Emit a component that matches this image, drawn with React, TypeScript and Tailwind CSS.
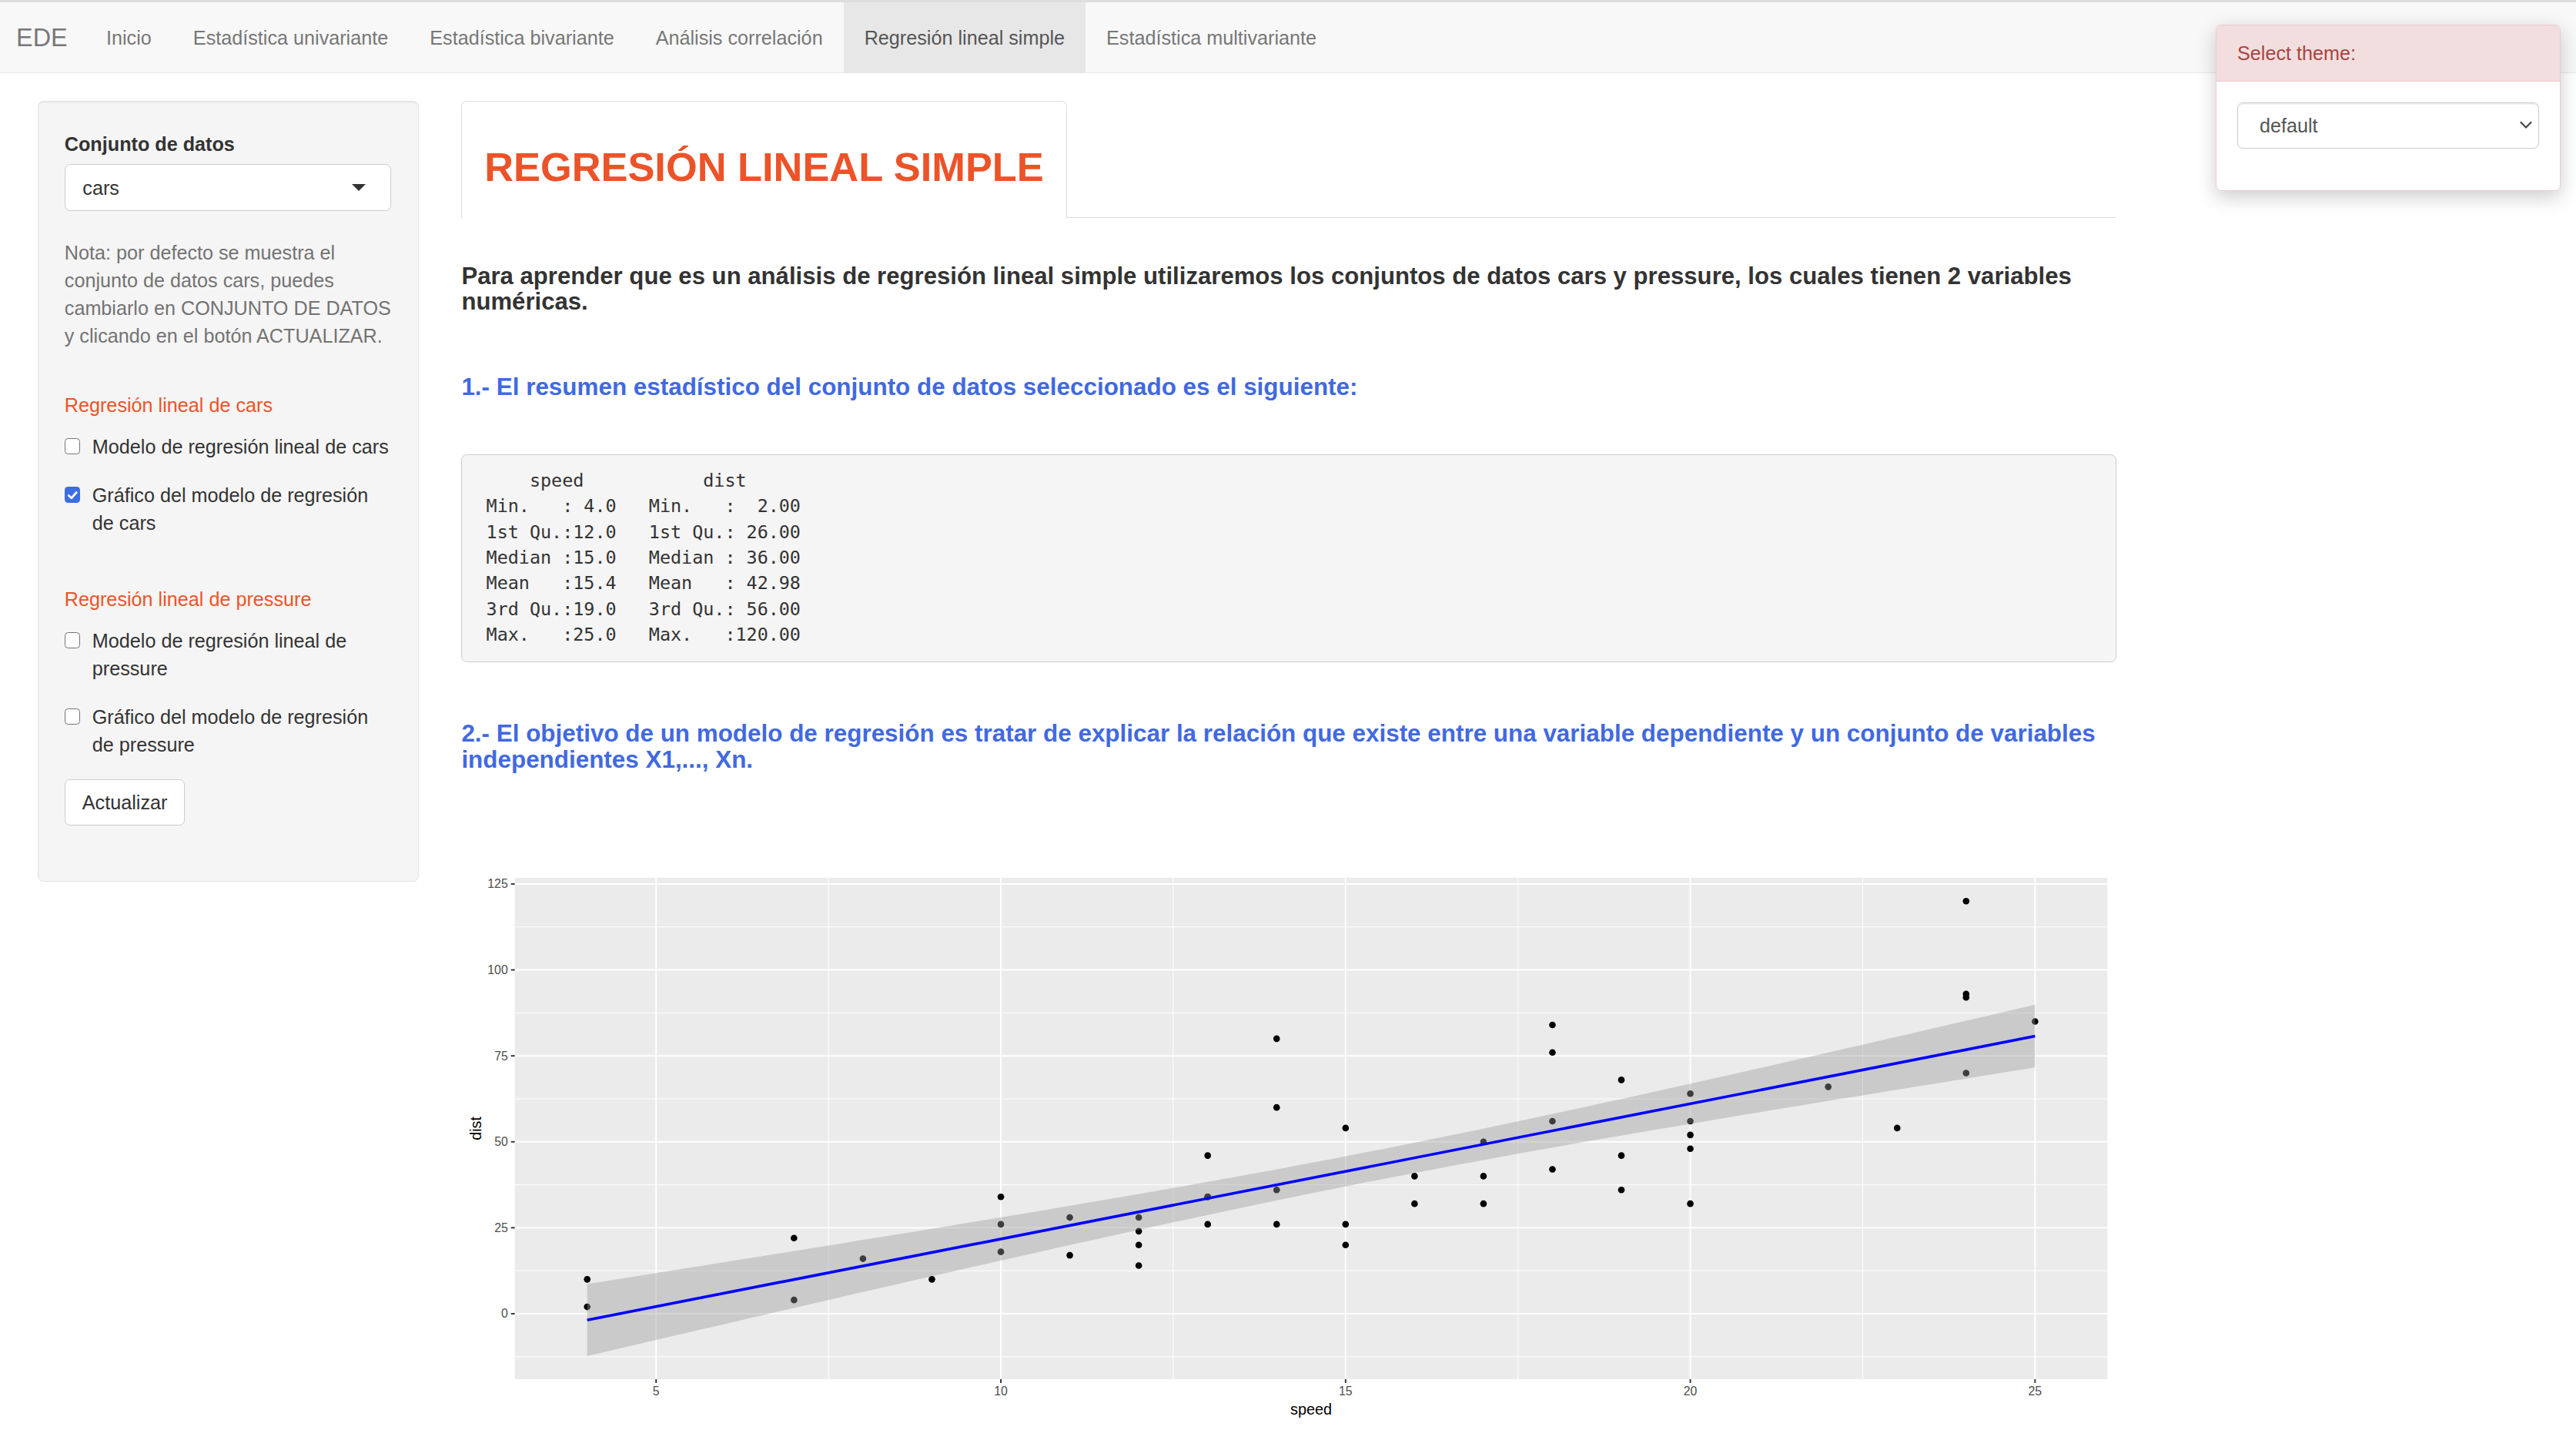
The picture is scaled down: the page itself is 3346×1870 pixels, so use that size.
import React from "react";

const SPEED = [4, 4, 7, 7, 8, 9, 10, 10, 10, 11, 11, 12, 12, 12, 12, 13, 13, 13, 13, 14, 14, 14, 14, 15, 15, 15, 16, 16, 17, 17, 17, 18, 18, 18, 18, 19, 19, 19, 20, 20, 20, 20, 20, 22, 23, 24, 24, 24, 24, 25];
const DIST = [2, 10, 4, 22, 16, 10, 18, 26, 34, 17, 28, 14, 20, 24, 28, 26, 34, 34, 46, 26, 36, 60, 80, 20, 26, 54, 32, 40, 32, 40, 50, 42, 56, 76, 84, 36, 46, 68, 32, 48, 52, 56, 64, 66, 54, 70, 92, 93, 120, 85];

function fit() {
  const n = SPEED.length;
  const mx = SPEED.reduce((p, c) => p + c, 0) / n;
  const my = DIST.reduce((p, c) => p + c, 0) / n;
  let sxx = 0;
  let sxy = 0;
  for (let i = 0; i < n; i++) {
    sxx += (SPEED[i] - mx) ** 2;
    sxy += (SPEED[i] - mx) * (DIST[i] - my);
  }
  const b = sxy / sxx;
  const a = my - b * mx;
  let sse = 0;
  for (let i = 0; i < n; i++) sse += (DIST[i] - a - b * SPEED[i]) ** 2;
  const s = Math.sqrt(sse / (n - 2));
  return { n, mx, sxx, a, b, s };
}

function RegressionPlot() {
  const W = 1194;
  const H = 400;
  const L = 38.7;
  const T = 5.5;
  const R = 1188;
  const B = 367.2;
  const x0 = 2.95;
  const x1 = 26.05;
  const y0 = -19.03;
  const y1 = 126.8;
  const X = (v: number) => L + ((v - x0) / (x1 - x0)) * (R - L);
  const Y = (v: number) => B - ((v - y0) / (y1 - y0)) * (B - T);
  const { n, mx, sxx, a, b, s } = fit();
  const t = 2.010635;
  const xs = Array.from({ length: 81 }, (_, i) => 4 + (21 * i) / 80);
  const band = xs.map((x) => {
    const yh = a + b * x;
    const se = s * Math.sqrt(1 / n + (x - mx) ** 2 / sxx);
    return { x, hi: yh + t * se, lo: yh - t * se };
  });
  const ribbon =
    "M" +
    band.map((p) => `${X(p.x).toFixed(2)},${Y(p.hi).toFixed(2)}`).join("L") +
    "L" +
    [...band]
      .reverse()
      .map((p) => `${X(p.x).toFixed(2)},${Y(p.lo).toFixed(2)}`)
      .join("L") +
    "Z";
  const majorX = [5, 10, 15, 20, 25];
  const minorX = [7.5, 12.5, 17.5, 22.5];
  const majorY = [0, 25, 50, 75, 100, 125];
  const minorY = [-12.5, 12.5, 37.5, 62.5, 87.5, 112.5];
  const font = "'Liberation Sans', Arial, sans-serif";
  return (
    <svg width={W} height={H} viewBox={`0 0 ${W} ${H}`} className="block">
      <rect x={L} y={T} width={R - L} height={B - T} fill="#ebebeb" />
      {minorY.map((v) => (
        <line key={`my${v}`} x1={L} x2={R} y1={Y(v)} y2={Y(v)} stroke="#ffffff" strokeWidth={0.55} />
      ))}
      {minorX.map((v) => (
        <line key={`mx${v}`} x1={X(v)} x2={X(v)} y1={T} y2={B} stroke="#ffffff" strokeWidth={0.55} />
      ))}
      {majorY.map((v) => (
        <line key={`My${v}`} x1={L} x2={R} y1={Y(v)} y2={Y(v)} stroke="#ffffff" strokeWidth={1.07} />
      ))}
      {majorX.map((v) => (
        <line key={`Mx${v}`} x1={X(v)} x2={X(v)} y1={T} y2={B} stroke="#ffffff" strokeWidth={1.07} />
      ))}
      {SPEED.map((sp, i) => (
        <circle key={`p${i}`} cx={X(sp)} cy={Y(DIST[i])} r={2.4} fill="#000000" />
      ))}
      <path d={ribbon} fill="#999999" fillOpacity={0.4} />
      <line x1={X(4)} y1={Y(a + b * 4)} x2={X(25)} y2={Y(a + b * 25)} stroke="#0000ff" strokeWidth={2} />
      {majorY.map((v) => (
        <g key={`ty${v}`}>
          <line x1={L - 2.75} x2={L} y1={Y(v)} y2={Y(v)} stroke="#333333" strokeWidth={1.07} />
          <text x={L - 4.95} y={Y(v)} textAnchor="end" dominantBaseline="central" fontSize={8.8} fill="#4d4d4d" fontFamily={font}>
            {v}
          </text>
        </g>
      ))}
      {majorX.map((v) => (
        <g key={`tx${v}`}>
          <line x1={X(v)} x2={X(v)} y1={B} y2={B + 2.75} stroke="#333333" strokeWidth={1.07} />
          <text x={X(v)} y={B + 8.6} textAnchor="middle" dominantBaseline="central" fontSize={8.8} fill="#4d4d4d" fontFamily={font}>
            {v}
          </text>
        </g>
      ))}
      <text x={(L + R) / 2} y={388.8} textAnchor="middle" dominantBaseline="central" fontSize={11} fill="#000000" fontFamily={font}>
        speed
      </text>
      <text
        transform={`translate(10.3 ${(T + B) / 2}) rotate(-90)`}
        textAnchor="middle"
        dominantBaseline="central"
        fontSize={11}
        fill="#000000"
        fontFamily={font}
      >
        dist
      </text>
    </svg>
  );
}

function CheckBox({ checked, lines }: { checked?: boolean; lines: string[] }) {
  return (
    <div className="flex">
      <div className="w-[20px] shrink-0">
        {checked ? (
          <span className="mt-[4.25px] flex h-[11.5px] w-[11.5px] items-center justify-center rounded-[2.5px] bg-[#3b6ee3]">
            <svg width="9" height="9" viewBox="0 0 10 10">
              <path d="M2 5.2 L4.2 7.3 L8.2 2.8" fill="none" stroke="#ffffff" strokeWidth="1.7" strokeLinecap="round" strokeLinejoin="round" />
            </svg>
          </span>
        ) : (
          <span className="mt-[4.25px] block h-[11.5px] w-[11.5px] rounded-[2.5px] border border-[#737373] bg-white" />
        )}
      </div>
      <div className="whitespace-nowrap leading-[20px] text-[#333]">
        {lines.map((l, i) => (
          <div key={i}>{l}</div>
        ))}
      </div>
    </div>
  );
}

const NAV = ["Inicio", "Estadística univariante", "Estadística bivariante", "Análisis correlación", "Regresión lineal simple", "Estadística multivariante"];

const SUMMARY = `     speed           dist       
 Min.   : 4.0   Min.   :  2.00  
 1st Qu.:12.0   1st Qu.: 26.00  
 Median :15.0   Median : 36.00  
 Mean   :15.4   Mean   : 42.98  
 3rd Qu.:19.0   3rd Qu.: 56.00  
 Max.   :25.0   Max.   :120.00  `;

export default function App() {
  return (
    <div className="relative min-h-[1040px] bg-white font-['Liberation_Sans',Arial,sans-serif] text-[14px] leading-[20px] text-[#333] [zoom:1.8]">
      <nav className="flex h-[53px] border-t-2 border-b border-t-[#dddddd] border-b-[#e7e7e7] bg-[#f8f8f8]">
        <div className="flex items-center pl-[11.7px] pr-[13px] text-[18px] text-[#777]">EDE</div>
        {NAV.map((item) => (
          <div
            key={item}
            className={
              item === "Regresión lineal simple"
                ? "flex items-center bg-[#e7e7e7] px-[15px] text-[#555]"
                : "flex items-center px-[15px] text-[#777]"
            }
          >
            {item}
          </div>
        ))}
      </nav>

      <div className="absolute right-[11px] top-[17.5px] z-10 w-[249px] rounded-[4px] border border-[#ebccd1] bg-white shadow-[0_4px_14px_rgba(0,0,0,0.2)]">
        <div className="rounded-t-[3px] border-b border-[#ebccd1] bg-[#f2dede] px-[15px] py-[10px] text-[#a94442]">Select theme:</div>
        <div className="px-[15px] pb-[30px] pt-[15px]">
          <div className="flex h-[33.5px] items-center justify-between rounded-[4px] border border-[#cccccc] bg-white pl-[15.5px] pr-[4px] text-[#555] shadow-[inset_0_1px_1px_rgba(0,0,0,0.075)]">
            <span>default</span>
            <svg width="10" height="7" viewBox="0 0 10 7">
              <path d="M1 1.3 L5 5.3 L9 1.3" fill="none" stroke="#444" strokeWidth="1.2" />
            </svg>
          </div>
        </div>
      </div>

      <div className="flex pl-[27px] pt-[20px]">
        <aside className="h-[563px] w-[275px] shrink-0 rounded-[4px] border border-[#e3e3e3] bg-[#f5f5f5] px-[19px] pt-[20.5px] shadow-[inset_0_1px_1px_rgba(0,0,0,0.05)]">
          <div className="mb-[4.5px] font-bold">Conjunto de datos</div>
          <div className="flex h-[33.5px] items-center justify-between rounded-[4px] border border-[#cccccc] bg-white pl-[12.5px] pr-[18px] text-[#333]">
            <span>cars</span>
            <span className="h-0 w-0 border-x-[5px] border-t-[5px] border-x-transparent border-t-[#333]" />
          </div>
          <p className="mt-[20px] whitespace-nowrap text-[#737373]">
            Nota: por defecto se muestra el
            <br />
            conjunto de datos cars, puedes
            <br />
            cambiarlo en CONJUNTO DE DATOS
            <br />y clicando en el botón ACTUALIZAR.
          </p>
          <div className="mt-[30px] text-[#ec5328]">Regresión lineal de cars</div>
          <div className="mt-[10px]">
            <CheckBox lines={["Modelo de regresión lineal de cars"]} />
          </div>
          <div className="mt-[15px]">
            <CheckBox checked lines={["Gráfico del modelo de regresión", "de cars"]} />
          </div>
          <div className="mt-[35px] text-[#ec5328]">Regresión lineal de pressure</div>
          <div className="mt-[10px]">
            <CheckBox lines={["Modelo de regresión lineal de", "pressure"]} />
          </div>
          <div className="mt-[15px]">
            <CheckBox lines={["Gráfico del modelo de regresión", "de pressure"]} />
          </div>
          <div className="mt-[15px] flex h-[33.5px] w-[87px] items-center justify-center rounded-[4px] border border-[#cccccc] bg-white text-[#333]">
            Actualizar
          </div>
        </aside>

        <main className="ml-[31px] w-[1194px] shrink-0">
          <div className="flex border-b border-[#dddddd]">
            <div className="-mb-px rounded-t-[4px] border border-[#dddddd] border-b-white bg-white px-[16px] pb-[20px] pt-[31.5px]">
              <h1 className="whitespace-nowrap text-[29.1px] font-bold leading-[32px] text-[#ec5328]">REGRESIÓN LINEAL SIMPLE</h1>
            </div>
          </div>

          <h4 className="mt-[32.6px] whitespace-nowrap text-[17.3px] font-bold leading-[18.6px] text-[#333]">
            Para aprender que es un análisis de regresión lineal simple utilizaremos los conjuntos de datos cars y pressure, los cuales tienen 2 variables
            <br />
            numéricas.
          </h4>

          <h4 className="mt-[43px] whitespace-nowrap text-[17.45px] font-bold leading-[18.6px] text-[#4169e1]">
            1.- El resumen estadístico del conjunto de datos seleccionado es el siguiente:
          </h4>

          <pre className="mt-[39px] rounded-[4px] border border-[#cccccc] bg-[#f5f5f5] p-[9.5px] font-['DejaVu_Sans_Mono',monospace] text-[13px] leading-[18.57px] text-[#333]">
            {SUMMARY}
          </pre>

          <h4 className="mt-[42.5px] whitespace-nowrap text-[17.45px] font-bold leading-[18.6px] text-[#4169e1]">
            2.- El objetivo de un modelo de regresión es tratar de explicar la relación que existe entre una variable dependiente y un conjunto de variables
            <br />
            independientes X1,..., Xn.
          </h4>

          <div className="mt-[70.5px]">
            <RegressionPlot />
          </div>
        </main>
      </div>
    </div>
  );
}
